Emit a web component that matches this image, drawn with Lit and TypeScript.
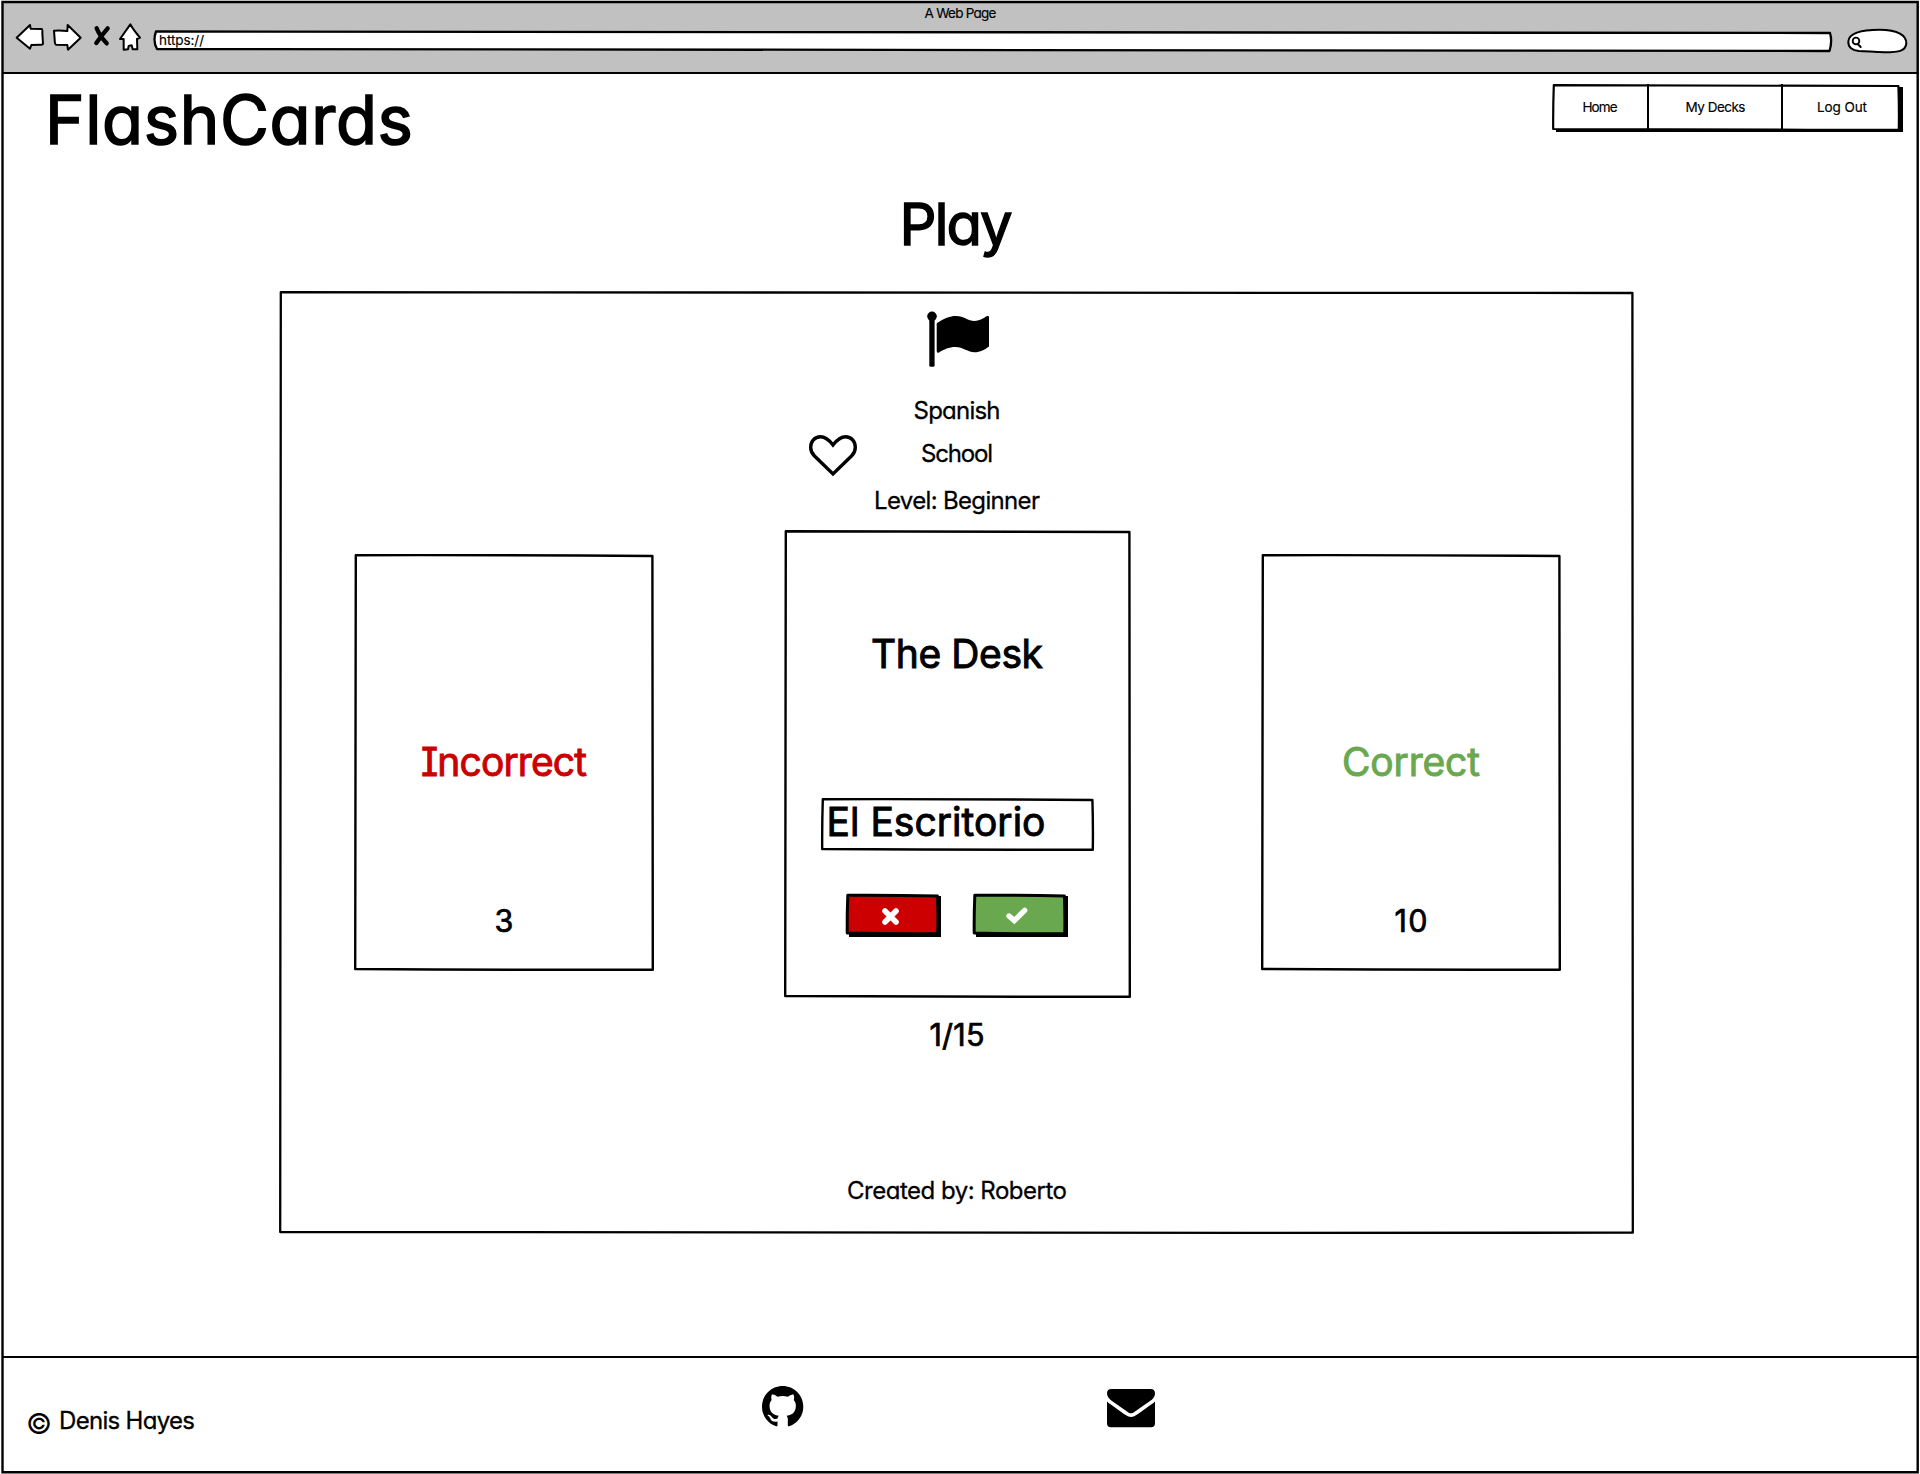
import { LitElement, html, css } from "lit";
import { customElement, property } from "lit/decorators.js";
import { styleMap } from "lit/directives/style-map.js";

/** Hand-drawn rectangle outline, laid behind the content of its box. */
const outline = (w: number, h: number, stroke = 2.4, fill = "none") => html`
  <svg class="outline" width=${w} height=${h} viewBox="0 0 ${w} ${h}" aria-hidden="true">
    <path
      d="M1.8 1.2 Q${w / 2} 0.9 ${w - 1.6} 2 Q${w - 0.8} ${h / 2} ${w - 1.2} ${h - 1.3}
         Q${w / 2} ${h - 0.9} 1.2 ${h - 2} Q1 ${h / 2} 1.8 1.2Z"
      fill=${fill} stroke="#000" stroke-width=${stroke} stroke-linejoin="round" />
  </svg>`;

/** A run of text tracked out or in so that it spans a given width. */
@customElement("fit-text")
export class FitText extends LitElement {
  @property() text = "";
  @property({ type: Number }) span = 0;
  @property({ type: Number }) size = 24;
  @property({ type: Number }) pen = 0.012;
  @property({ type: Number }) tracking = 0;

  static styles = css`
    :host { display: flex; }
    .run {
      display: block;
      white-space: pre;
      line-height: 1;
      font-family: Inter, "Open Sans", sans-serif;
      font-weight: 400;
      font-feature-settings: "cv11" 1, "cv08" 1, "calt" 0;
      stroke-linejoin: round;
    }
  `;

  firstUpdated() {
    const run = this.renderRoot.querySelector(".run") as HTMLElement;
    const natural = run.getBoundingClientRect().width;
    const gaps = this.text.length - 1;
    if (gaps > 0) this.tracking = (this.span - natural) / gaps;
  }

  render() {
    return html`<span class="run" style=${styleMap({
      fontSize: `${this.size}px`,
      letterSpacing: `${this.tracking}px`,
      marginRight: `${-this.tracking}px`,
      "-webkit-text-stroke": `${this.pen}em`,
    })}>${this.text}</span>`;
  }
}

const t = (text: string, span: number, size: number, pen = 0.012) =>
  html`<fit-text .text=${text} .span=${span} .size=${size} .pen=${pen}></fit-text>`;

const BOLD = 0.024;

@customElement("app-root")
export class AppRoot extends LitElement {
  static styles = css`
    :host { display: block; width: 1920px; height: 1474px; background: #fff; color: #000; }
    * { box-sizing: border-box; }
    svg { display: block; overflow: visible; flex: none; }
    .outline { position: absolute; left: 0; top: 0; z-index: -1; }
    .boxed { position: relative; isolation: isolate; }
    .window { position: relative; isolation: isolate; width: 1920px; height: 1474px; display: flex; flex-direction: column; padding: 1px 1px 1px 2px; background: #fff; overflow: hidden; }
    .frame { position: absolute; left: 0; top: 0; }

    .toolbar { height: 73px; background: #c1c1c1; border-bottom: 2.5px solid #000; display: flex; flex-direction: column; flex: none; }
    .caption { height: 23px; padding-top: 6px; display: flex; justify-content: center; }
    .controls { height: 28px; display: flex; padding-left: 13px; }
    .fwd { margin-left: 7px; }
    .stop { margin-left: 10px; }
    .home { margin-left: 6px; }
    .url { width: 1678px; height: 21px; margin: 7px 0 0 12px; padding: 3px 0 0 5px; }
    .find { margin: 5px 0 0 15px; }

    .header { height: 81px; flex: none; display: flex; justify-content: space-between; padding: 0 16px 0 43px; }
    .brand { margin-top: 12px; }
    .nav { width: 348px; height: 47px; margin: 10px 3px 0 0; display: grid; grid-template-columns: 95px 134px 119px; }
    .nav::before { content: ""; position: absolute; left: 4px; top: 3px; width: 347px; height: 44.5px; background: #000; z-index: -2; }
    .tab { display: flex; align-items: center; justify-content: center; padding-left: 1px; }
    .tab + .tab { border-left: 2.2px solid #000; }

    .title { display: flex; justify-content: center; height: 136px; padding: 40px 9px 0 0; flex: none; }
    .panel { width: 1355px; height: 943px; margin-left: 277px; display: grid; grid-template-columns: 300px 347px 299px; justify-content: space-between; padding: 0 74px 0 75px; flex: none; }
    .side { width: 300px; height: 417px; margin-top: 263px; display: flex; flex-direction: column; align-items: center; }
    .side .name { margin-top: 188px; }
    .side .count { margin-top: 125px; }
    .bad { color: #cc0000; }
    .good { color: #6aa84f; }
    .middle { display: flex; flex-direction: column; align-items: center; margin: 0 0.5px 0 -0.5px; }
    .flag { margin: 18px 0 0 2px; }
    .lang { margin-top: 29.5px; }
    .topic { width: 347px; height: 42px; margin-top: 10.5px; display: grid; grid-template-columns: 1fr 72px 1fr; align-items: center; }
    .topic fit-text { padding-bottom: 1.5px; }
    .heart { margin-left: 24.5px; }
    .level { margin-top: 13.5px; }
    .card { width: 347px; height: 468px; margin-top: 17px; display: flex; flex-direction: column; align-items: center; }
    .word { margin-top: 104px; }
    .answer { width: 273px; height: 53px; margin-top: 125px; padding: 4.5px 0 0 6px; }
    .buttons { display: flex; gap: 32px; margin-top: 43px; }
    .button { width: 95px; height: 42px; }
    .button::before { content: ""; position: absolute; left: 3px; top: 2px; width: 92px; height: 41px; background: #000; z-index: -2; }
    .cross { margin: 14px 0 0 35.7px; }
    .tick { margin: 13.5px 0 0 33.3px; }
    .progress { margin-top: 22.5px; }
    .author { margin-top: 128.5px; }

    .footer { margin-top: 122px; height: 116px; border-top: 2.5px solid #000; display: flex; align-items: flex-start; flex: none; }
    .copy { display: flex; margin: 51px 0 0 24px; gap: 6px; width: 736px; }
    .mark { margin-top: 0.5px; width: 27px; }
    .hub { margin-top: 28px; }
    .mail { margin: 31px 0 0 304px; }
  `;

  render() {
    const ink = "#000";
    return html`
      <div class="window">
        <div class="toolbar">
          <div class="caption">${t("A Web Page", 72, 13.5)}</div>
          <div class="controls">
            <svg width="30" height="28" viewBox="45 72 90 84">
              <path d="M50 113L90 75L92 86L125 87Q128 88 127 100L129 132Q128 135 122 134L94 135L90 146Z" fill="#fff" stroke=${ink} stroke-width="6" stroke-linejoin="round"/>
            </svg>
            <svg class="fwd" width="30" height="28" viewBox="156 72 90 84">
              <path d="M162 92Q180 90 202 93L203 75L242 113L204 149L202 135L168 134Q164 132 164 118Z" fill="#fff" stroke=${ink} stroke-width="6" stroke-linejoin="round"/>
            </svg>
            <svg class="stop" width="20" height="28" viewBox="276 72 60 84">
              <path d="M290 85Q299 108 320 130M323 85Q305 106 289 129" fill="none" stroke=${ink} stroke-width="13" stroke-linecap="round"/>
            </svg>
            <svg class="home" width="24" height="28" viewBox="354 72 72 84">
              <path d="M391 73Q400 90 420 113L411 117L412 148L398 148L395 136L386 138L384 148L371 149L371 117L360 117Z" fill="#fff" stroke=${ink} stroke-width="6" stroke-linejoin="round"/>
            </svg>
            <div class="url boxed">
              <svg class="outline" width="1678" height="21" viewBox="0 0 1678 21">
                <path d="M2 0.500L1676 2Q1678.500 10 1675.500 20L3 18Q-1.500 10 2 0.500Z" fill="#fff" stroke=${ink} stroke-width="2.300" stroke-linejoin="round"/>
              </svg>
              ${t("https://", 45, 13.5)}
            </div>
            <svg class="find" width="60" height="24" viewBox="982 87 180 72">
              <path d="M986 124C988 98 1030 89 1080 89C1130 90 1160 102 1160 130C1158 152 1140 157 1095 157C1060 157 1045 153 1018 153C998 152 985 142 986 124Z" fill="#fff" stroke=${ink} stroke-width="6"/>
              <circle cx="1009" cy="123" r="10" fill="none" stroke=${ink} stroke-width="5.500"/>
              <path d="M1014 132L1023 141" stroke=${ink} stroke-width="6" stroke-linecap="round"/>
            </svg>
          </div>
        </div>

        <header class="header">
          <div class="brand">${t("FlashCards", 368, 67, BOLD)}</div>
          <nav class="nav boxed">
            ${outline(348, 47, 2.2, "#fff")}
            <div class="tab">${t("Home", 35, 13.5)}</div>
            <div class="tab">${t("My Decks", 60, 13.5)}</div>
            <div class="tab">${t("Log Out", 50, 13.5)}</div>
          </nav>
        </header>

        <div class="title">${t("Play", 113, 58, BOLD)}</div>

        <main class="panel boxed">
          ${outline(1355, 943, 2.3)}
          <section class="side boxed">
            ${outline(300, 417)}
            <div class="name bad">${t("Incorrect", 166, 39, BOLD)}</div>
            <div class="count">${t("3", 20, 30.5, BOLD)}</div>
          </section>
          <div class="middle">
            <svg class="flag" width="66" height="60" viewBox="0 0 66 60">
              <circle cx="7" cy="7.300" r="4.800"/>
              <rect x="4.300" y="8" width="5.300" height="49.800" rx="1.600"/>
              <path d="M12 14C19 9.500 25 7 31 7C39 7 43 12 49.500 12C54 12 58 9.500 61.500 7.300Q64 6 64 8.500V37.500C60 40.500 55 43.300 49.500 43.300C43 43.300 38 38 30.500 38C24 38 19 40.500 14 43.400Q11.700 44.400 11.700 42V15Q11.700 14.300 12 14Z"/>
            </svg>
            <div class="lang">${t("Spanish", 87, 24)}</div>
            <div class="topic">
              <svg class="heart" width="50" height="44" viewBox="0 0 50 44">
                <path d="M25 12C21.500 7.500 18 3.800 12.500 3.800C6.500 3.800 2.700 8.500 2.700 14.500C2.700 18 4 20.500 6.500 23L25 41L43.500 23C46 20.500 47.300 18 47.300 14.500C47.300 8.500 43.500 3.800 37.500 3.800C32 3.800 28.500 7.500 25 12Z" fill="none" stroke=${ink} stroke-width="3.400"/>
              </svg>
              ${t("School", 72, 24)}
            </div>
            <div class="level">${t("Level: Beginner", 166, 24)}</div>
            <section class="card boxed">
              ${outline(347, 468)}
              <div class="word">${t("The Desk", 172, 39, BOLD)}</div>
              <div class="answer boxed">${outline(273, 53)}${t("El Escritorio", 219, 39, BOLD)}</div>
              <div class="buttons">
                <div class="button boxed">
                  ${outline(93, 41, 3, "#cc0000")}
                  <svg class="cross" width="17" height="17" viewBox="0 0 17 17">
                    <path d="M3 3L14 14M14 3L3 14" stroke="#fff" stroke-width="5.600" stroke-linecap="round"/>
                  </svg>
                </div>
                <div class="button boxed">
                  ${outline(93, 41, 3, "#6aa84f")}
                  <svg class="tick" width="22" height="17" viewBox="0 0 22 17">
                    <path d="M3 9L8.300 13.600L18.700 3.300" fill="none" stroke="#fff" stroke-width="5.400" stroke-linecap="round"/>
                  </svg>
                </div>
              </div>
            </section>
            <div class="progress">${t("1/15", 55, 30.5, BOLD)}</div>
            <div class="author">${t("Created by: Roberto", 220, 24)}</div>
          </div>
          <section class="side boxed">
            ${outline(300, 417)}
            <div class="name good">${t("Correct", 138, 39, BOLD)}</div>
            <div class="count">${t("10", 33, 30.5, BOLD)}</div>
          </section>
        </main>

        <footer class="footer">
          <div class="copy">
            <div class="mark">${t("©", 27, 28.5, 0)}</div>
            ${t("Denis Hayes", 136, 24)}
          </div>
          <svg class="hub" width="41.300" height="41.300" viewBox="0 0 16 16">
            <path d="M8 0C3.58 0 0 3.58 0 8c0 3.54 2.29 6.53 5.47 7.59.4.07.55-.17.55-.38 0-.19-.01-.82-.01-1.49-2.01.37-2.53-.49-2.69-.94-.09-.23-.48-.94-.82-1.13-.28-.15-.68-.52-.01-.53.63-.01 1.08.58 1.23.82.72 1.21 1.87.87 2.33.66.07-.52.28-.87.51-1.07-1.78-.2-3.64-.89-3.64-3.95 0-.87.31-1.59.82-2.15-.08-.2-.36-1.02.08-2.12 0 0 .67-.21 2.2.82.64-.18 1.32-.27 2-.27s1.36.09 2 .27c1.53-1.04 2.2-.82 2.2-.82.44 1.1.16 1.92.08 2.12.51.56.82 1.27.82 2.15 0 3.07-1.87 3.75-3.65 3.95.29.25.54.73.54 1.48 0 1.07-.01 1.93-.01 2.2 0 .21.15.46.55.38A8.01 8.01 0 0 0 16 8c0-4.42-3.58-8-8-8z"/>
          </svg>
          <svg class="mail" width="48" height="38.300" viewBox="0 0 48 38.300">
            <path d="M0 4.500Q0 0 4.500 0H43.500Q48 0 48 4.500C48 8 45.500 10.500 43 12L28 22.500C26 24 25 24.300 24 24.300C23 24.300 22 24 20 22.500L5 12C2.500 10.300 0 7.500 0 4.500Z"/>
            <path d="M0 12.500C1 13.500 2 14.500 3.500 15.300L17 25C20 27 22 28 24 28C26 28 28 27 31 25L44.500 15.300C46 14.300 47 13.500 48 12.500V34Q48 38.300 44 38.300H4Q0 38.300 0 34Z"/>
          </svg>
        </footer>
        <svg class="frame" width="1920" height="1474" viewBox="0 0 1920 1474">
          <path d="M2.500 2H1917.700V1472.200H2.500Z" fill="none" stroke=${ink} stroke-width="2.400"/>
        </svg>
      </div>
    `;
  }
}
